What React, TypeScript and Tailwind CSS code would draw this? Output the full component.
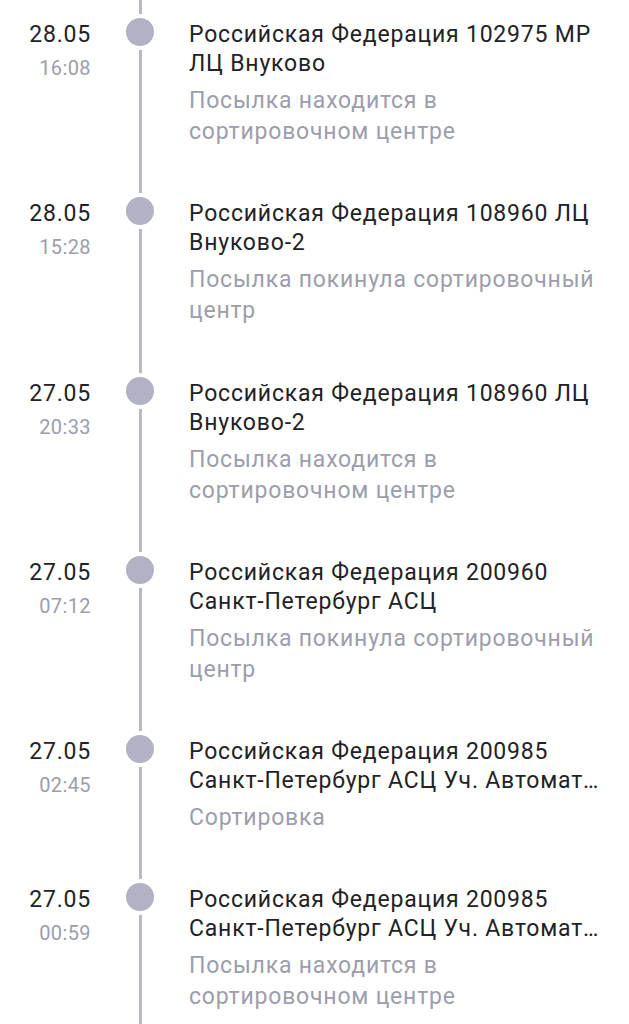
const events = [
  {
    date: "28.05",
    time: "16:08",
    place: ["Российская Федерация 102975 МР", "ЛЦ Внуково"],
    status: ["Посылка находится в", "сортировочном центре"],
  },
  {
    date: "28.05",
    time: "15:28",
    place: ["Российская Федерация 108960 ЛЦ", "Внуково-2"],
    status: ["Посылка покинула сортировочный", "центр"],
  },
  {
    date: "27.05",
    time: "20:33",
    place: ["Российская Федерация 108960 ЛЦ", "Внуково-2"],
    status: ["Посылка находится в", "сортировочном центре"],
  },
  {
    date: "27.05",
    time: "07:12",
    place: ["Российская Федерация 200960", "Санкт-Петербург АСЦ"],
    status: ["Посылка покинула сортировочный", "центр"],
  },
  {
    date: "27.05",
    time: "02:45",
    place: ["Российская Федерация 200985", "Санкт-Петербург АСЦ Уч. Автомат…"],
    status: ["Сортировка"],
  },
  {
    date: "27.05",
    time: "00:59",
    place: ["Российская Федерация 200985", "Санкт-Петербург АСЦ Уч. Автомат…"],
    status: ["Посылка находится в", "сортировочном центре"],
  },
];

export default function App() {
  return (
    <div
      className="h-[1024px] w-full overflow-hidden bg-white tracking-[0.8px]"
      style={{ fontFamily: "Roboto, 'Noto Sans', sans-serif" }}
    >
      {events.map((ev, idx) => (
        <div key={idx} className="flex">
          {/* date + time */}
          <div className="flex w-[91px] flex-col items-end pt-[20px]">
            <div className="text-[23px] leading-[29px] text-[#222226]">{ev.date}</div>
            <div className="mt-[7px] text-[20px] leading-[24px] tracking-[0.4px] text-[#9d9dab]">{ev.time}</div>
          </div>

          {/* timeline */}
          <div className="flex w-[98px] flex-col items-center">
            <div className="h-[14px] w-[3px] bg-[#b9b9c2]" />
            <div className="my-[4px] h-[28px] w-[28px] rounded-full bg-[#b1b2c3]" />
            <div className="w-[3px] flex-1 bg-[#b9b9c2]" />
          </div>

          {/* details */}
          <div className="flex-1 pb-[32.3px] pt-[20px]">
            {ev.place.map((line) => (
              <div key={line} className="whitespace-nowrap text-[23px] leading-[29px] text-[#222226]">
                {line}
              </div>
            ))}
            <div className="mt-[7px]">
              {ev.status.map((line) => (
                <div key={line} className="whitespace-nowrap text-[23px] leading-[31px] text-[#9d9dab]">
                  {line}
                </div>
              ))}
            </div>
          </div>
        </div>
      ))}
    </div>
  );
}
